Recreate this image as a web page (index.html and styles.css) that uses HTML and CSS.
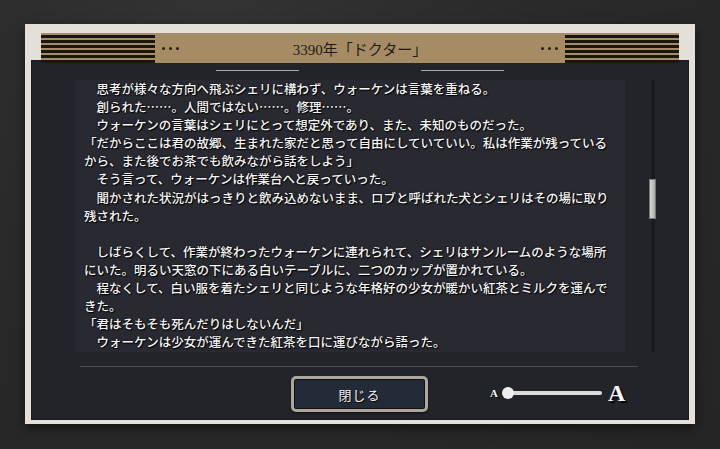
FILE: index.html
```html
<!DOCTYPE html>
<html lang="ja">
<head>
<meta charset="utf-8">
<title>3390年「ドクター」</title>
<link rel="stylesheet" href="styles.css">
</head>
<body>
<div class="frame">
  <div class="header">
    <div class="stripes"></div>
    <div class="dots"><i></i><i></i><i></i></div>
    <div class="title">3390年「ドクター」</div>
    <div class="dots"><i></i><i></i><i></i></div>
    <div class="stripes"></div>
  </div>
  <div class="inner">
    <div class="deco"><span class="deco-line"></span><span class="deco-line"></span></div>
    <div class="body-row">
      <div class="text-panel">
        <div class="line">　思考が様々な方向へ飛ぶシェリに構わず、ウォーケンは言葉を重ねる。</div>
        <div class="line">　創られた……。人間ではない……。修理……。</div>
        <div class="line">　ウォーケンの言葉はシェリにとって想定外であり、また、未知のものだった。</div>
        <div class="line">「だからここは君の故郷、生まれた家だと思って自由にしていていい。私は作業が残っている</div>
        <div class="line">から、また後でお茶でも飲みながら話をしよう」</div>
        <div class="line">　そう言って、ウォーケンは作業台へと戻っていった。</div>
        <div class="line">　聞かされた状況がはっきりと飲み込めないまま、ロブと呼ばれた犬とシェリはその場に取り</div>
        <div class="line">残された。</div>
        <div class="line">&nbsp;</div>
        <div class="line">　しばらくして、作業が終わったウォーケンに連れられて、シェリはサンルームのような場所</div>
        <div class="line">にいた。明るい天窓の下にある白いテーブルに、二つのカップが置かれている。</div>
        <div class="line">　程なくして、白い服を着たシェリと同じような年格好の少女が暖かい紅茶とミルクを運んで</div>
        <div class="line">きた。</div>
        <div class="line">「君はそもそも死んだりはしないんだ」</div>
        <div class="line">　ウォーケンは少女が運んできた紅茶を口に運びながら語った。</div>
      </div>
      <div class="scrollbar"><div class="thumb"></div></div>
    </div>
    <div class="divider"></div>
    <div class="bottom-row">
      <button class="close-btn">閉じる</button>
      <div class="size-slider">
        <span class="a-small">A</span>
        <div class="track"><span class="knob"></span></div>
        <span class="a-big">A</span>
      </div>
    </div>
  </div>
</div>
</body>
</html>
```
FILE: styles.css
```css
* { box-sizing: border-box; }
html, body { margin: 0; padding: 0; }
body {
  width: 720px;
  height: 449px;
  overflow: hidden;
  background: radial-gradient(ellipse at 30% 0%, #333333 0%, #2a2a2a 45%, #252525 100%);
  font-family: "Noto Sans CJK JP", sans-serif;
  padding-top: 24px;
}
.frame {
  width: 670px;
  height: 400px;
  margin-left: 25px;
  background: #e3dfd9;
  padding: 9px 6px 4px 6px;
  box-shadow: 0 4px 10px rgba(0,0,0,0.5);
}
.header {
  position: relative;
  z-index: 1;
  margin: 0 10px;
  height: 30px;
  background: #a58c65;
  display: flex;
  align-items: center;
}
.stripes {
  width: 114px;
  height: 30px;
  background: repeating-linear-gradient(to bottom, #a58c65 0, #a58c65 2.5px, #1a1610 2.5px, #1a1610 5px);
}
.dots {
  display: flex;
  gap: 4px;
  margin: 0 7px;
}
.dots i {
  display: block;
  width: 3px;
  height: 3px;
  border-radius: 50%;
  background: #2a2016;
}
.title {
  flex: 1;
  text-align: center;
  font-family: "Liberation Serif", "Noto Sans CJK JP", serif;
  font-size: 15px;
  color: #241c12;
}
.inner {
  margin-top: -3px;
  height: 360px;
  background: #23242a;
  display: flex;
  flex-direction: column;
  box-shadow: inset 0 0 0 1px #1c1d22;
}
.deco {
  display: flex;
  justify-content: center;
  gap: 122px;
  margin-top: 10px;
  height: 1px;
}
.deco-line {
  width: 83px;
  height: 1px;
  background: #a9a9a9;
}
.body-row {
  display: flex;
  margin-top: 9px;
  height: 272px;
}
.text-panel {
  margin-left: 44px;
  width: 550px;
  height: 272px;
  background: #292a31;
  padding: 0 0 0 9px;
  overflow: hidden;
  color: #f6f6f6;
  font-size: 12.5px;
  font-weight: 500;
  line-height: 18.1px;
  text-shadow: 1px 1px 1px #000, 0 0 2px #000;
  white-space: nowrap;
}
.line { height: 18.1px; }
.scrollbar {
  position: relative;
  margin-left: 24px;
  width: 7px;
  height: 272px;
  display: flex;
  justify-content: center;
}
.scrollbar::before {
  content: "";
  width: 4px;
  height: 100%;
  background: #1a1b20;
}
.thumb {
  position: absolute;
  top: 99px;
  left: 0;
  width: 7px;
  height: 40px;
  background: linear-gradient(to right, #d8d8d8, #aaaaaa);
  border: 1px solid #777;
}
.divider {
  margin: 14px 51px 0 49px;
  height: 1px;
  background: #4d4e55;
}
.bottom-row {
  display: flex;
  align-items: center;
  margin-top: 9px;
  padding-left: 260px;
  gap: 62px;
}
.close-btn {
  width: 137px;
  height: 36px;
  background: #242b38;
  border: 3px solid #aca79c;
  border-radius: 5px;
  box-shadow: inset 0 0 0 1px #111, 0 1px 2px rgba(0,0,0,0.6);
  color: #f2f2f2;
  font-family: "Noto Sans CJK JP", sans-serif;
  font-size: 13px;
  text-shadow: 1px 1px 1px #000;
  padding: 0;
  letter-spacing: 1px;
}
.size-slider {
  display: flex;
  align-items: center;
  margin-top: -3px;
}
.a-small {
  font-family: "Liberation Serif", serif;
  font-weight: bold;
  font-size: 11px;
  color: #f2f2f2;
  text-shadow: 1px 1px 1px #000;
  margin-right: 6px;
}
.track {
  position: relative;
  width: 98px;
  height: 4px;
  background: #dcdcdc;
  border-radius: 2px;
}
.knob {
  position: absolute;
  left: -2px;
  top: -4px;
  width: 12px;
  height: 12px;
  border-radius: 50%;
  background: #eeeeee;
}
.a-big {
  font-family: "Liberation Serif", serif;
  font-weight: bold;
  font-size: 24px;
  color: #f6f6f6;
  text-shadow: 2px 2px 1px #000;
  margin-left: 6px;
  line-height: 1;
}
```
